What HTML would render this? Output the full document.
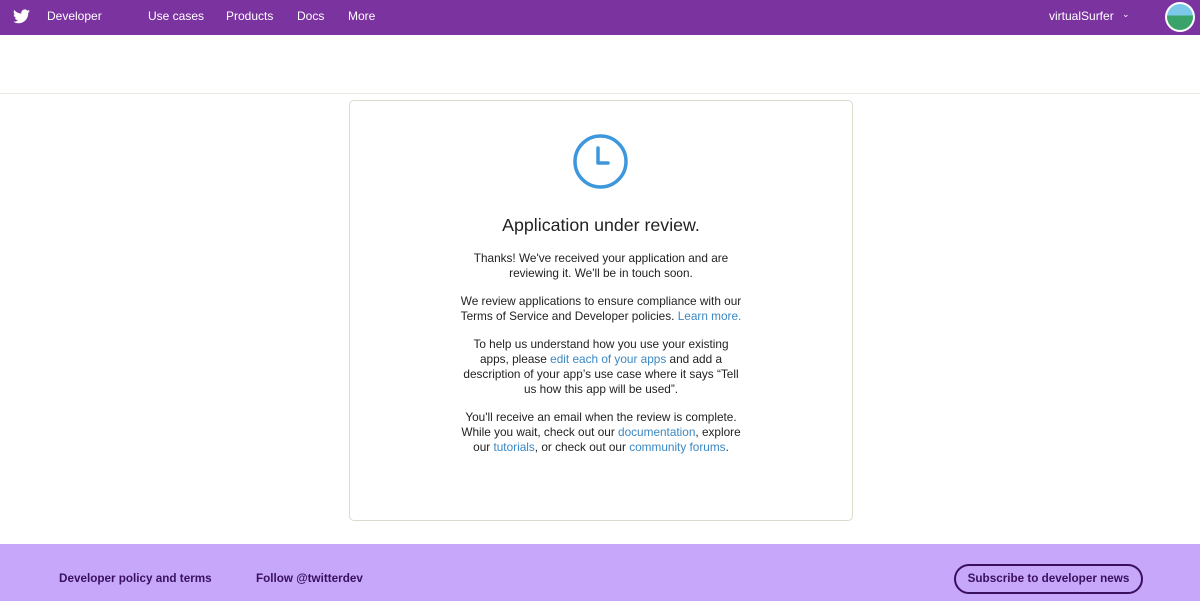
<!DOCTYPE html>
<html><head><meta charset="utf-8"><style>
*{margin:0;padding:0;box-sizing:border-box}
body{width:1200px;height:601px;overflow:hidden;background:#fff;font-family:"Liberation Sans",Arial,sans-serif;position:relative}
.nav{position:absolute;left:0;top:0;width:1200px;height:35px;background:#7b33a0;color:#fff;font-size:12px}
.nav span{position:absolute;top:9px}
.line{position:absolute;top:93px;left:0;width:1200px;height:1px;background:#ebebe3}
.card{position:absolute;left:349px;top:100px;width:504px;height:421px;border:1px solid #dcdccc;border-radius:5px}
h1{position:absolute;top:215px;left:349px;width:504px;text-align:center;font-weight:normal;font-size:17.8px;color:#222}
.p{position:absolute;left:349px;width:504px;text-align:center;font-size:11.8px;line-height:15px;color:#222}
a{color:#3b88c3;text-decoration:none}
.foot{position:absolute;top:544px;left:0;width:1200px;height:57px;background:#c6a7fa;color:#3a0f5e;font-weight:bold;font-size:11.7px}
.foot span{position:absolute;top:28px}
.btn{position:absolute;left:954px;top:20px;width:189px;height:30px;border:2px solid #3a0f5e;border-radius:15px;text-align:center;line-height:26px}
</style></head><body>
<div class="nav">
<svg style="position:absolute;left:13px;top:9px" width="17" height="15" viewBox="0 0 24 20"><path fill="#fff" d="M24 2.4a9.8 9.8 0 0 1-2.8.8A4.9 4.9 0 0 0 23.3.5a9.9 9.9 0 0 1-3.1 1.2A4.9 4.9 0 0 0 11.8 6 14 14 0 0 1 1.7.9a4.9 4.9 0 0 0 1.5 6.6A4.9 4.9 0 0 1 1 6.9v.1a4.9 4.9 0 0 0 3.9 4.8 4.9 4.9 0 0 1-2.2.1 4.9 4.9 0 0 0 4.6 3.4A9.9 9.9 0 0 1 0 17.3 14 14 0 0 0 7.5 19.5c9.1 0 14-7.5 14-14v-.6A10 10 0 0 0 24 2.4z"/></svg>
<span style="left:47px">Developer</span><span style="left:148px">Use cases</span><span style="left:226px">Products</span><span style="left:297px">Docs</span><span style="left:348px">More</span>
<span style="left:1049px">virtualSurfer</span><span style="left:1122px;font-size:9px;top:9px">&#8964;</span>
<div style="position:absolute;left:1165px;top:2px;width:30px;height:30px;border-radius:50%;background:#fff;padding:2px"><div style="width:26px;height:26px;border-radius:50%;background:linear-gradient(#7cc8e8 45%,#3aa36a 45%)"></div></div>
</div>
<div class="line"></div>
<div class="card"></div>
<svg style="position:absolute;left:572px;top:133px" width="57" height="57" viewBox="0 0 57 57"><circle cx="28.5" cy="28.5" r="25.5" fill="none" stroke="#3d97dd" stroke-width="3.5"/><path d="M26 15v15h10" fill="none" stroke="#3d97dd" stroke-width="3.5" stroke-linecap="round" stroke-linejoin="round"/></svg>
<h1>Application under review.</h1>
<div class="p" style="top:251px">Thanks! We've received your application and are<br>reviewing it. We'll be in touch soon.</div>
<div class="p" style="top:294px">We review applications to ensure compliance with our<br>Terms of Service and Developer policies. <a>Learn more.</a></div>
<div class="p" style="top:337px">To help us understand how you use your existing<br>apps, please <a>edit each of your apps</a> and add a<br>description of your app’s use case where it says “Tell<br>us how this app will be used”.</div>
<div class="p" style="top:410px">You'll receive an email when the review is complete.<br>While you wait, check out our <a>documentation</a>, explore<br>our <a>tutorials</a>, or check out our <a>community forums</a>.</div>
<div class="foot"><span style="left:59px">Developer policy and terms</span><span style="left:256px">Follow @twitterdev</span><div class="btn">Subscribe to developer news</div></div>
</body></html>
